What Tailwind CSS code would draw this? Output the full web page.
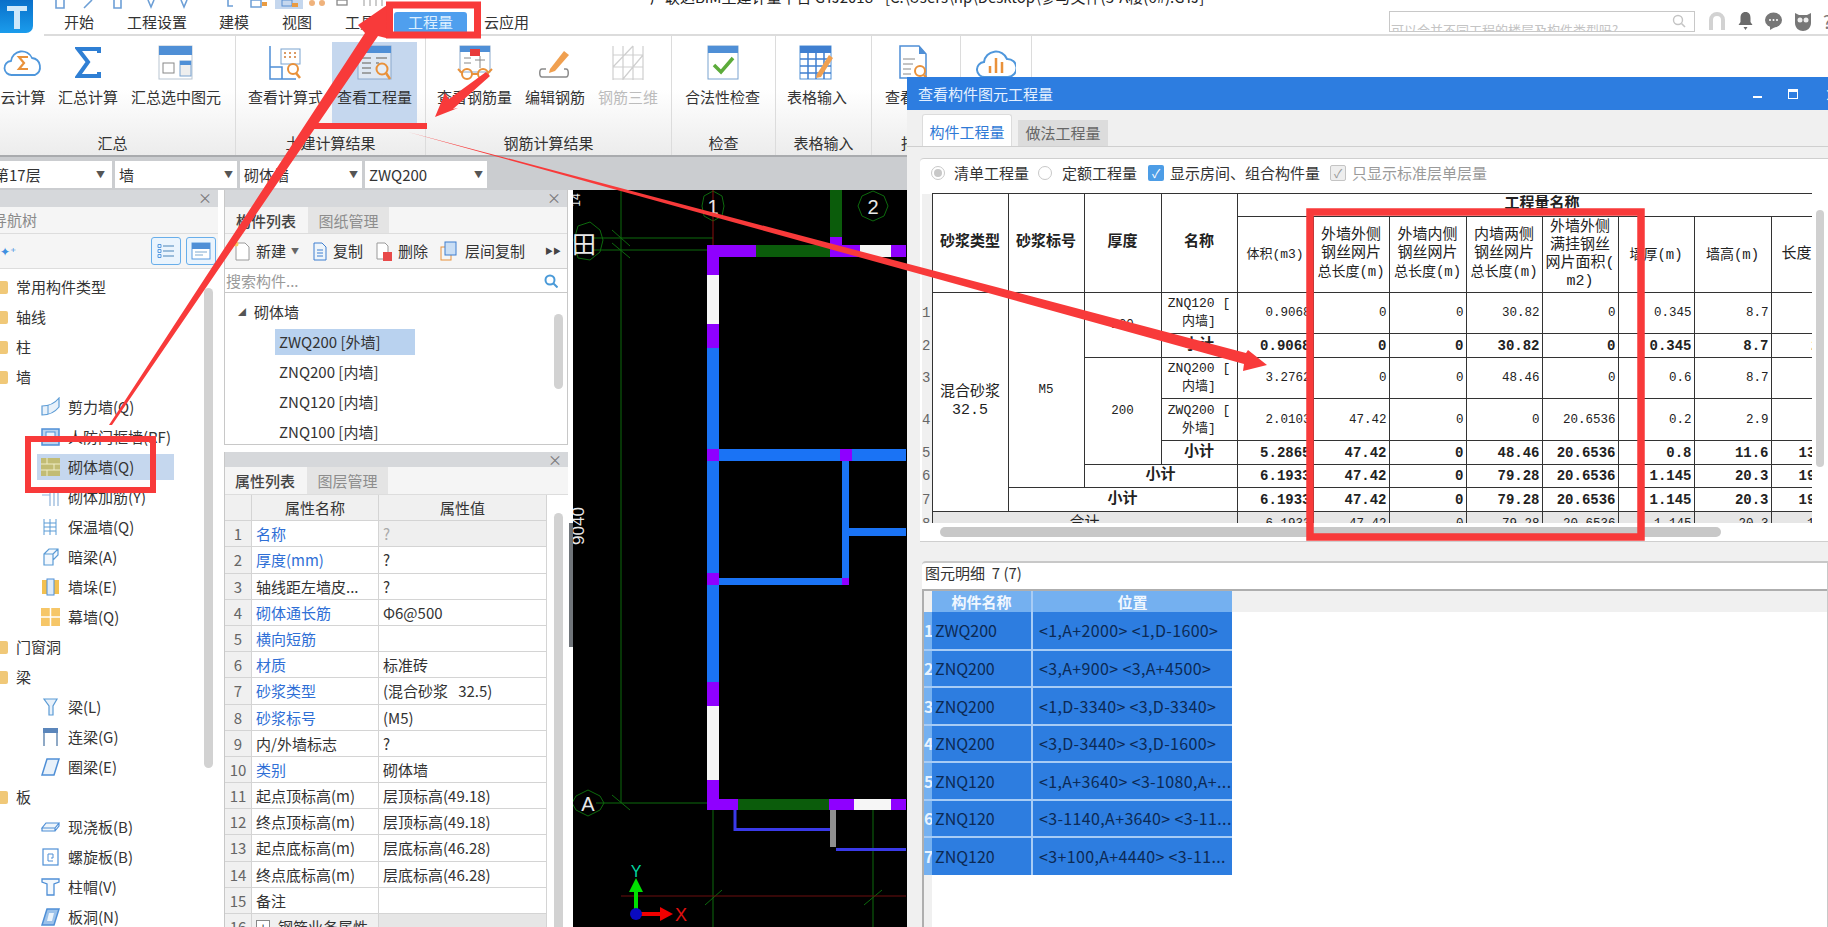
<!DOCTYPE html>
<html lang="zh">
<head>
<meta charset="utf-8">
<title>查看构件图元工程量</title>
<script src="https://cdn.jsdelivr.net/npm/@tailwindcss/browser@4"></script>
</head>
<body>
<div class="relative w-[1828px] h-[927px] overflow-hidden bg-white text-[#333] text-[15px] leading-[20px] [font-family:'Noto_Sans_CJK_SC',sans-serif]">

  <!-- app header -->
  <header class="flex h-[36px]">
    <div class="w-[44px] shrink-0">
      <div class="w-[33px] h-[33px] rounded-br-[7px] bg-gradient-to-b from-[#0a6fc9] to-[#1b9cec] flex items-center justify-center">
        <svg width="22" height="26" viewBox="0 0 22 26"><path d="M1 2h20v5h-7v18h-6V7H1z" fill="#cfe8fa"/></svg>
      </div>
    </div>
    <div class="flex-1 border-b-2 border-[#dcdcdc] flex flex-col">
      <div class="h-[12px] flex items-start">
        <svg class="shrink-0" width="340" height="12" viewBox="44 0 340 12">
          <path d="M56 0v8h8V0M84 8l8-8M114 0v8h7V0M148 0l3 7 3-7M181 0l3 7 3-7" fill="none" stroke="#6d9fd6" stroke-width="1.6"/>
          <path d="M228 0v6h5" fill="none" stroke="#6d9fd6" stroke-width="1.6"/>
          <rect x="251" y="0" width="10" height="7" fill="none" stroke="#6d9fd6" stroke-width="1.5"/><rect x="262" y="2" width="5" height="4" fill="#e99b42"/>
          <rect x="275" y="0" width="28" height="9" fill="#c5d7ee"/><rect x="282" y="0" width="10" height="6" fill="none" stroke="#5a8fd0"/><rect x="292" y="3" width="6" height="4" fill="#e99b42"/>
          <circle cx="312" cy="3" r="3" fill="#efb27c"/><circle cx="322" cy="3" r="3" fill="#efb27c"/>
          <rect x="337" y="0" width="10" height="5" fill="none" stroke="#888" stroke-width="1.3"/>
          <path d="M364 0v6M370 0v6M376 0v6M382 0v6" stroke="#ccc" stroke-width="2"/>
        </svg>
        <span class="ml-[266px] -mt-[13px] whitespace-nowrap text-[#222]">广联达BIM土建计量平台 GTJ2018 - [C:\Users\hp\Desktop\参与文件(3-A楼(6#).GTJ]</span>
      </div>
      <nav class="h-[22px] flex items-end pl-[20px] relative">
        <span class="h-[22px] leading-[20px]">开始</span>
        <span class="h-[22px] leading-[20px] ml-[33px]">工程设置</span>
        <span class="h-[22px] leading-[20px] ml-[32px]">建模</span>
        <span class="h-[22px] leading-[20px] ml-[33px]">视图</span>
        <span class="h-[22px] leading-[20px] ml-[33px]">工具</span>
        <span class="h-[22px] leading-[20px] ml-[19px] px-[14px] rounded-t-[3px] bg-[#4f9fee] text-[#dcefff]">工程量</span>
        <span class="h-[22px] leading-[20px] ml-[17px]">云应用</span>
        <div class="ml-auto h-[22px] flex items-start">
          <div class="w-[306px] h-[21px] -mt-[1px] border border-[#c8c8c8] overflow-hidden flex justify-between pl-[1px] pr-[8px]">
            <span class="text-[13px] text-[#c4c4c4] pt-[8px] whitespace-nowrap">可以合并不同工程的楼层及构件类型吗?</span>
            <svg class="mt-[2px]" width="14" height="14" viewBox="0 0 14 14"><circle cx="6" cy="6" r="4.5" fill="none" stroke="#c4c4c4" stroke-width="1.4"/><path d="M9.5 9.5 13 13" stroke="#c4c4c4" stroke-width="1.6"/></svg>
          </div>
          <div class="w-[133px] h-[20px] -mt-[1px] flex items-center pl-[12px] gap-[10px]">
            <svg class="shrink-0" width="20" height="22" viewBox="0 0 20 22"><path d="M2 20V10a8 8 0 0 1 16 0v10h-4V10a4 4 0 0 0-8 0v10z" fill="#d2d2d2"/></svg>
            <svg class="shrink-0" width="17" height="20" viewBox="0 0 17 20"><path d="M8.500 1c3.500 0 5 2.500 5 6v4l2 3H1.500l2-3V7c0-3.500 1.500-6 5-6zM6.500 16h4l-2 3z" fill="#6a6a6a"/></svg>
            <svg class="shrink-0" width="19" height="18" viewBox="0 0 19 18"><ellipse cx="9.500" cy="8" rx="8.500" ry="7.500" fill="#777"/><path d="M6 14v4l5-3z" fill="#777"/><circle cx="6" cy="8" r="1" fill="#fff"/><circle cx="9.500" cy="8" r="1" fill="#fff"/><circle cx="13" cy="8" r="1" fill="#fff"/></svg>
            <svg class="shrink-0" width="20" height="22" viewBox="0 0 20 22"><path d="M2 3l4 2h8l4-2v10c0 5-4 8-8 8s-8-3-8-8z" fill="#777"/><circle cx="7" cy="10" r="2.500" fill="#eee"/><circle cx="13" cy="10" r="2.500" fill="#eee"/></svg>
            <span class="text-[18px] text-[#777]">?</span>
          </div>
        </div>
      </nav>
    </div>
  </header>

  <!-- ribbon -->
  <section class="h-[119px] flex bg-gradient-to-b from-white from-[45%] to-[#ececec]">
    <div class="w-[236px] shrink-0 border-r border-[#dcdcdc] pt-[6px] flex flex-col items-stretch">
      <div class="h-[81px] flex gap-[12px]">
        <div class="w-[46px] flex flex-col items-center pt-[3px] whitespace-nowrap">
          <svg class="h-[36px]" width="42" height="36" viewBox="0 0 42 36"><path d="M10 30a7 7 0 0 1-1-14 11 11 0 0 1 21-3 9 9 0 0 1 3 17z" fill="none" stroke="#4f97dc" stroke-width="1.800"/><path d="M26 12h-9l5 6-5 6h9" fill="none" stroke="#e9913a" stroke-width="2.200"/></svg>
          <span class="mt-[6px]">云计算</span>
        </div>
        <div class="w-[60px] flex flex-col items-center pt-[3px] whitespace-nowrap">
          <svg class="h-[36px]" width="26" height="36" viewBox="0 0 26 36"><path d="M24 8V4H3l10 13L3 31h21v-4" fill="none" stroke="#2f7fd4" stroke-width="4"/></svg>
          <span class="mt-[6px]">汇总计算</span>
        </div>
        <div class="w-[92px] flex flex-col items-center pt-[3px] whitespace-nowrap">
          <svg class="h-[36px]" width="36" height="36" viewBox="0 0 36 36"><rect x="1" y="1" width="33" height="33" fill="#fff" stroke="#b9c5d2"/><rect x="1" y="1" width="33" height="9" fill="#4f8fd6"/><rect x="5" y="18" width="11" height="10" fill="none" stroke="#888"/><rect x="22" y="16" width="11" height="15" fill="#eee" stroke="#7aa3d0"/><rect x="22" y="16" width="11" height="4" fill="#4f8fd6"/></svg>
          <span class="mt-[6px]">汇总选中图元</span>
        </div>
      </div>
      <div class="h-[20px] mt-[10px] text-center pr-[10px]">汇总</div>
    </div>
    <div class="w-[190px] shrink-0 border-r border-[#dcdcdc] pt-[6px] flex flex-col">
      <div class="h-[81px] flex pl-[12px] gap-[9px]">
        <div class="w-[75px] flex flex-col items-center pt-[3px] whitespace-nowrap">
          <svg class="h-[36px]" width="34" height="36" viewBox="0 0 34 36"><path d="M1 1v33h26" fill="none" stroke="#4f8fd6" stroke-width="1.500"/><path d="M1 22h12v12" fill="none" stroke="#4f8fd6" stroke-width="1.500"/><rect x="12" y="4" width="19" height="15" fill="#fff" stroke="#7aa3d0"/><path d="M15 8h2M20 8h2M25 8h2M15 12h2M20 12h2M25 12h2" stroke="#d07a33" stroke-width="1.500"/><circle cx="24" cy="24" r="5" fill="#fff" stroke="#e9913a" stroke-width="2"/><path d="m27 28 4 5" stroke="#e9913a" stroke-width="2.500"/></svg>
          <span class="mt-[6px]">查看计算式</span>
        </div>
        <div class="w-[85px] h-[81px] bg-[#c5d7ee] flex flex-col items-center pt-[3px] whitespace-nowrap">
          <svg class="h-[36px]" width="36" height="36" viewBox="0 0 36 36"><rect x="1" y="1" width="33" height="33" fill="#dfe8f3" stroke="#8ba9cc"/><rect x="1" y="1" width="33" height="7" fill="#4f8fd6"/><path d="M5 13h9M5 18h9M5 23h9M5 28h9M19 13h11M19 18h3" stroke="#8a8a8a" stroke-width="1.300"/><circle cx="25" cy="24" r="5.500" fill="#e4edf7" stroke="#e9913a" stroke-width="2"/><path d="m29 28 4 6" stroke="#e9913a" stroke-width="2.500"/></svg>
          <span class="mt-[6px]">查看工程量</span>
        </div>
      </div>
      <div class="h-[20px] mt-[10px] text-center">土建计算结果</div>
    </div>
    <div class="w-[246px] shrink-0 border-r border-[#dcdcdc] pt-[6px] flex flex-col">
      <div class="h-[81px] flex pl-[11px] gap-[13px]">
        <div class="w-[75px] flex flex-col items-center pt-[3px] whitespace-nowrap">
          <svg class="h-[36px]" width="36" height="36" viewBox="0 0 36 36"><rect x="3" y="1" width="30" height="26" fill="#fff" stroke="#8ba9cc"/><rect x="3" y="1" width="30" height="6" fill="#4f8fd6"/><rect x="13" y="4" width="10" height="7" fill="#e83a3a"/><path d="M7 13h7M7 18h7M18 15h10M23 11v12" stroke="#888"/><circle cx="10" cy="29" r="5" fill="none" stroke="#e9913a" stroke-width="2"/><circle cx="26" cy="29" r="5" fill="none" stroke="#e9913a" stroke-width="2"/><path d="M15 29h6M5 28 1 24M31 28l4-4" stroke="#e9913a" stroke-width="2"/></svg>
          <span class="mt-[6px]">查看钢筋量</span>
        </div>
        <div class="w-[60px] flex flex-col items-center pt-[3px] whitespace-nowrap">
          <svg class="h-[36px]" width="34" height="36" viewBox="0 0 34 36"><path d="M8 24H4c-3 0-3 8 0 8h24c3 0 3-8 0-8h-2" fill="none" stroke="#8a8a8a" stroke-width="1.500"/><path d="m12 24 14-18 5 4-14 16-6 2z" fill="#f0a050"/></svg>
          <span class="mt-[6px]">编辑钢筋</span>
        </div>
        <div class="w-[60px] flex flex-col items-center pt-[3px] whitespace-nowrap text-[#bcbcbc]">
          <svg class="h-[36px]" width="36" height="36" viewBox="0 0 36 36"><path d="M3 1v34M13 1v34M23 1v34M33 1v34M3 10h30M3 22h30M3 34h30M3 22 23 1M13 34l20-24" fill="none" stroke="#cfcfcf" stroke-width="1.200"/></svg>
          <span class="mt-[6px]">钢筋三维</span>
        </div>
      </div>
      <div class="h-[20px] mt-[10px] text-center">钢筋计算结果</div>
    </div>
    <div class="w-[104px] shrink-0 border-r border-[#dcdcdc] pt-[6px] flex flex-col">
      <div class="h-[81px] flex pl-[13px]">
        <div class="w-[75px] flex flex-col items-center pt-[3px] whitespace-nowrap">
          <svg class="h-[36px]" width="32" height="36" viewBox="0 0 32 36"><rect x="1" y="1" width="30" height="33" fill="#fff" stroke="#7aa3d0"/><rect x="1" y="1" width="30" height="7" fill="#4f8fd6"/><path d="m7 20 7 7 12-14" fill="none" stroke="#5cab3a" stroke-width="3.500"/></svg>
          <span class="mt-[6px]">合法性检查</span>
        </div>
      </div>
      <div class="h-[20px] mt-[10px] text-center">检查</div>
    </div>
    <div class="w-[96px] shrink-0 border-r border-[#dcdcdc] pt-[6px] flex flex-col">
      <div class="h-[81px] flex pl-[11px]">
        <div class="w-[60px] flex flex-col items-center pt-[3px] whitespace-nowrap">
          <svg class="h-[36px]" width="36" height="36" viewBox="0 0 36 36"><rect x="1" y="1" width="31" height="33" fill="#fff" stroke="#4f8fd6"/><rect x="1" y="1" width="31" height="7" fill="#3f7fd0"/><path d="M1 14h31M1 21h31M1 28h31M9 8v26M17 8v26M25 8v26" stroke="#3f7fd0" stroke-width="1.500"/><path d="m18 29 12-19 4 3-12 19-5 1z" fill="#f0a050"/></svg>
          <span class="mt-[6px]">表格输入</span>
        </div>
      </div>
      <div class="h-[20px] mt-[10px] text-center">表格输入</div>
    </div>
    <div class="w-[89px] shrink-0 border-r border-[#dcdcdc] pt-[6px] flex flex-col">
      <div class="h-[81px] flex pl-[13px]">
        <div class="w-[60px] flex flex-col items-center pt-[3px] whitespace-nowrap">
          <svg class="h-[36px]" width="32" height="36" viewBox="0 0 32 36"><path d="M1 1h19l7 8v24H1z" fill="#fff" stroke="#4f8fd6" stroke-width="1.500"/><path d="M20 1v8h7" fill="#4f8fd6"/><path d="M4 14h12M4 19h10M4 24h8M4 29h8" stroke="#888"/><circle cx="21" cy="26" r="5" fill="#fff" stroke="#e9913a" stroke-width="2"/><path d="m25 30 4 5" stroke="#e9913a" stroke-width="2.500"/></svg>
          <span class="mt-[6px]">查看报表</span>
        </div>
      </div>
      <div class="h-[20px] mt-[10px] text-center">报表</div>
    </div>
    <div class="w-[71px] shrink-0 border-r border-[#dcdcdc] pt-[6px] flex flex-col">
      <div class="h-[81px] flex justify-center pt-[3px]">
        <svg width="40" height="36" viewBox="0 0 40 36"><path d="M9 32a7 7 0 0 1-1-15 12 12 0 0 1 23-3 9 9 0 0 1 1 18z" fill="none" stroke="#4f97dc" stroke-width="2"/><path d="M14 28v-7M20 28V13M26 28v-11" stroke="#e9913a" stroke-width="2.500"/></svg>
      </div>
    </div>
  </section>

  <!-- selector band -->
  <section class="h-[35px] bg-[#cbcdd0] border-t-2 border-[#a9abae] flex gap-[3px] pt-[4px]">
    <div class="w-[112px] h-[27px] bg-white flex items-center justify-between pr-[7px] pl-0 overflow-hidden"><span class="-ml-[6px]">第17层</span><span class="text-[9px] text-[#555]">▼</span></div>
    <div class="w-[122px] h-[27px] bg-white flex items-center justify-between px-[4px]"><span>墙</span><span class="text-[9px] text-[#555]">▼</span></div>
    <div class="w-[122px] h-[27px] bg-white flex items-center justify-between px-[4px]"><span>砌体墙</span><span class="text-[9px] text-[#555]">▼</span></div>
    <div class="w-[122px] h-[27px] bg-white flex items-center justify-between px-[4px]"><span>ZWQ200</span><span class="text-[9px] text-[#555]">▼</span></div>
  </section>

  <!-- main -->
  <main class="flex h-[737px]">
    <!-- navigation tree -->
    <aside class="relative w-[218px] shrink-0 flex flex-col overflow-hidden">
      <div class="h-[17px] shrink-0 bg-[#d6d8db] text-right pr-[6px] text-[#777] text-[14px] leading-[14px]">×</div>
      <div class="h-[26px] shrink-0 bg-[#f5f5f5] text-[#8a8a8a] leading-[26px] -ml-[8px]">导航树</div>
      <div class="h-[36px] shrink-0 bg-[#f5f5f5] border-y border-[#ddd] flex items-center justify-between pr-[2px] pl-[0px]">
        <span class="text-[#3f8fe0] text-[12px]">✦⁺</span>
        <div class="flex gap-[5px]">
          <div class="w-[30px] h-[28px] rounded-[3px] border border-[#68aeea] bg-[#eaf4fd] flex items-center justify-center">
            <svg width="18" height="18" viewBox="0 0 18 18"><path d="M6 4h11M6 9h11M6 14h11" stroke="#7fa9cf" stroke-width="1.300"/><path d="M1 2.500h3v3H1zM1 7.500h3v3H1zM1 12.500h3v3H1z" fill="none" stroke="#5a9be0"/></svg>
          </div>
          <div class="w-[30px] h-[28px] rounded-[3px] border border-[#68aeea] bg-[#eaf4fd] flex items-center justify-center">
            <svg width="20" height="18" viewBox="0 0 20 18"><rect x="1" y="1" width="18" height="16" fill="#fff" stroke="#5a9be0"/><rect x="1" y="1" width="18" height="6" fill="#4f8fd6"/><path d="M4 10h12M4 13h8" stroke="#7fa9cf"/></svg>
          </div>
        </div>
      </div>
      <ul class="pt-[3px] shrink-0">
        <li class="h-[30px] flex items-center gap-[8px]"><span class="w-[8px] h-[13px] rounded-r-[2px] bg-[#f0c878] shrink-0"></span>常用构件类型</li>
        <li class="h-[30px] flex items-center gap-[8px]"><span class="w-[8px] h-[13px] rounded-r-[2px] bg-[#f0c878] shrink-0"></span>轴线</li>
        <li class="h-[30px] flex items-center gap-[8px]"><span class="w-[8px] h-[13px] rounded-r-[2px] bg-[#f0c878] shrink-0"></span>柱</li>
        <li class="h-[30px] flex items-center gap-[8px]"><span class="w-[8px] h-[13px] rounded-r-[2px] bg-[#f0c878] shrink-0"></span>墙</li>
        <li class="h-[30px] flex items-center pl-[41px] gap-[8px]"><svg class="shrink-0" width="19" height="20" viewBox="0 0 19 20"><path d="M1 9c6 0 13-3 17-8v9c-4 5-11 8-17 8z" fill="#e8f1fa" stroke="#5b9bd5" stroke-width="1.200"/><path d="M7 8v9" stroke="#5b9bd5"/></svg>剪力墙(Q)</li>
        <li class="h-[30px] flex items-center pl-[41px] gap-[8px]"><svg class="shrink-0" width="19" height="20" viewBox="0 0 19 20"><rect x="1" y="2" width="17" height="16" fill="#b9d4ef" stroke="#4f8fd6" stroke-width="1.500"/><rect x="5" y="5" width="9" height="9" fill="#eaf2fb" stroke="#4f8fd6"/></svg>人防门框墙(RF)</li>
        <li class="h-[26px] my-[2px] ml-[37px] w-[137px] bg-[#c5d7ee] flex items-center pl-[4px] gap-[8px]"><svg class="shrink-0" width="19" height="18" viewBox="0 0 19 18"><rect x="0" y="0" width="19" height="18" fill="#c2bc74"/><path d="M0 6h19M0 12h19M6 0v6M13 6v6M6 12v6" stroke="#f0edc6"/></svg>砌体墙(Q)</li>
        <li class="h-[30px] flex items-center pl-[41px] gap-[8px]"><svg class="shrink-0" width="19" height="20" viewBox="0 0 19 20"><path d="M1 8h8M9 3v16M13 3v16M17 3v16" stroke="#8fb3d9" stroke-width="1.200"/></svg>砌体加筋(Y)</li>
        <li class="h-[30px] flex items-center pl-[41px] gap-[8px]"><svg class="shrink-0" width="19" height="20" viewBox="0 0 19 20"><path d="M3 2v16M9 2v16M15 2v16M3 6h12M3 10h12M3 14h12" fill="none" stroke="#5b9bd5"/></svg>保温墙(Q)</li>
        <li class="h-[30px] flex items-center pl-[41px] gap-[8px]"><svg class="shrink-0" width="19" height="20" viewBox="0 0 19 20"><path d="M3 7l5-5h9v6l-5 5v5H3zM3 7h9v6M12 7l5-5" fill="#f3f8fd" stroke="#5b9bd5" stroke-width="1.200"/></svg>暗梁(A)</li>
        <li class="h-[30px] flex items-center pl-[41px] gap-[8px]"><svg class="shrink-0" width="19" height="20" viewBox="0 0 19 20"><rect x="1" y="3" width="17" height="14" fill="#f3c04f"/><rect x="6" y="2" width="7" height="16" fill="#dcebfa" stroke="#4f8fd6"/></svg>墙垛(E)</li>
        <li class="h-[30px] flex items-center pl-[41px] gap-[8px]"><svg class="shrink-0" width="19" height="20" viewBox="0 0 19 20"><rect x="0" y="1" width="19" height="18" fill="#f6c667"/><path d="M9.500 1v18M0 10h19" stroke="#fff" stroke-width="1.500"/></svg>幕墙(Q)</li>
        <li class="h-[30px] flex items-center gap-[8px]"><span class="w-[8px] h-[13px] rounded-r-[2px] bg-[#f0c878] shrink-0"></span>门窗洞</li>
        <li class="h-[30px] flex items-center gap-[8px]"><span class="w-[8px] h-[13px] rounded-r-[2px] bg-[#f0c878] shrink-0"></span>梁</li>
        <li class="h-[30px] flex items-center pl-[41px] gap-[8px]"><svg class="shrink-0" width="19" height="20" viewBox="0 0 19 20"><path d="M3 2h13l-4 7v9H8V9z" fill="#e8f1fa" stroke="#5b9bd5" stroke-width="1.200"/></svg>梁(L)</li>
        <li class="h-[30px] flex items-center pl-[41px] gap-[8px]"><svg class="shrink-0" width="19" height="20" viewBox="0 0 19 20"><path d="M3 19V4h13v15" fill="none" stroke="#8fa9c6" stroke-width="2"/><rect x="2" y="1" width="15" height="5" fill="#5b86bb"/></svg>连梁(G)</li>
        <li class="h-[30px] flex items-center pl-[41px] gap-[8px]"><svg class="shrink-0" width="19" height="20" viewBox="0 0 19 20"><path d="M6 2h12l-5 16H1z" fill="#e8f1fa" stroke="#4f8fd6" stroke-width="1.500"/></svg>圈梁(E)</li>
        <li class="h-[30px] flex items-center gap-[8px]"><span class="w-[8px] h-[13px] rounded-r-[2px] bg-[#f0c878] shrink-0"></span>板</li>
        <li class="h-[30px] flex items-center pl-[41px] gap-[8px]"><svg class="shrink-0" width="19" height="20" viewBox="0 0 19 20"><path d="M5 6h13l-4 5H1zM1 11v3h13v-3M14 14l4-5V6" fill="#eef5fb" stroke="#4f8fd6" stroke-width="1.200"/></svg>现浇板(B)</li>
        <li class="h-[30px] flex items-center pl-[41px] gap-[8px]"><svg class="shrink-0" width="19" height="20" viewBox="0 0 19 20"><rect x="2" y="2" width="15" height="16" fill="none" stroke="#4f8fd6" stroke-width="1.200"/><path d="M12 14H7V7h5v4H10" fill="none" stroke="#4f8fd6"/></svg>螺旋板(B)</li>
        <li class="h-[30px] flex items-center pl-[41px] gap-[8px]"><svg class="shrink-0" width="19" height="20" viewBox="0 0 19 20"><path d="M1 2h17v3l-5 2v11H6V7L1 5z" fill="#f3f8fd" stroke="#4f8fd6" stroke-width="1.300"/></svg>柱帽(V)</li>
        <li class="h-[30px] flex items-center pl-[41px] gap-[8px]"><svg class="shrink-0" width="19" height="20" viewBox="0 0 19 20"><path d="M6 2h12l-5 16H1z" fill="#9cc2ea" stroke="#4f8fd6" stroke-width="1.500"/><path d="M8 6h5l-2 8H6z" fill="#eaf3fb"/></svg>板洞(N)</li>
      </ul>
      <div class="absolute left-[204px] top-[98px] w-[9px] h-[480px] rounded-full bg-[#d2d2d2]"></div>
    </aside>

    <div class="w-[6px] shrink-0 bg-white"></div>

    <!-- component list + properties -->
    <section class="w-[344px] shrink-0 flex flex-col">
      <div class="h-[255px] shrink-0 border border-t-0 border-[#c8c8c8] flex flex-col relative overflow-hidden">
        <div class="h-[17px] shrink-0 bg-[#d6d8db] text-right pr-[6px] text-[#777] text-[14px] leading-[14px]">×</div>
        <div class="h-[27px] shrink-0 bg-[#f5f5f5] flex pl-[11px] border-b border-[#ddd]">
          <span class="w-[72px] font-medium leading-[27px] text-[#444]">构件列表</span>
          <span class="w-[81px] bg-[#e4e4e4] text-[#8d8d8d] text-center leading-[27px]">图纸管理</span>
        </div>
        <div class="h-[35px] shrink-0 bg-[#f5f5f5] border-b border-[#d0d0d0] flex items-center pl-[8px] pr-[6px] whitespace-nowrap">
          <svg class="shrink-0" width="17" height="20" viewBox="0 0 17 20"><path d="M3 2h9l4 4v13H3z" fill="#fff" stroke="#9a9a9a"/><circle cx="3" cy="3" r="2.500" fill="#f6cc66"/></svg>
          <span class="ml-[6px]">新建</span><span class="ml-[5px] text-[8px] text-[#666]">▼</span>
          <svg class="ml-[14px] shrink-0" width="14" height="19" viewBox="0 0 14 19"><path d="M1 1h8l4 4v13H1z" fill="#eef5fb" stroke="#3f7fd0"/><path d="M4 8h6M4 11h6M4 14h6" stroke="#3f7fd0"/></svg>
          <span class="ml-[6px]">复制</span>
          <svg class="ml-[13px] shrink-0" width="16" height="19" viewBox="0 0 16 19"><path d="M1 1h8l3 3v13H1z" fill="#fff" stroke="#999"/><rect x="7" y="10" width="9" height="9" fill="#e84a4a"/></svg>
          <span class="ml-[6px]">删除</span>
          <svg class="ml-[12px] shrink-0" width="17" height="20" viewBox="0 0 17 20"><rect x="1" y="6" width="10" height="13" fill="none" stroke="#e9913a"/><rect x="5" y="1" width="11" height="13" fill="#c9def5" stroke="#3f7fd0"/></svg>
          <span class="ml-[8px]">层间复制</span>
          <span class="ml-auto text-[8px] text-[#444]">▶▶</span>
        </div>
        <div class="h-[24px] shrink-0 border-b border-[#c8c8c8] flex items-center justify-between pr-[9px] pl-[1px] text-[#9a9a9a]">
          <span>搜索构件...</span>
          <svg width="14" height="14" viewBox="0 0 14 14"><circle cx="6" cy="6" r="4.500" fill="none" stroke="#4a9ad8" stroke-width="2"/><path d="m9.500 9.500 4 4" stroke="#4a9ad8" stroke-width="2"/></svg>
        </div>
        <div class="pt-[4px] shrink-0">
          <div class="h-[30px] flex items-center pl-[13px]"><span class="text-[8px] text-[#555] mr-[8px]">◢</span>砌体墙</div>
          <div class="h-[26px] mt-[2px] mb-[2px] ml-[50px] w-[140px] bg-[#b9d2ef] flex items-center pl-[4px]">ZWQ200 [外墙]</div>
          <div class="h-[30px] flex items-center pl-[54px]">ZNQ200 [内墙]</div>
          <div class="h-[30px] flex items-center pl-[54px]">ZNQ120 [内墙]</div>
          <div class="h-[30px] flex items-center pl-[54px]">ZNQ100 [内墙]</div>
        </div>
        <div class="absolute left-[329px] top-[124px] w-[9px] h-[75px] rounded-full bg-[#d2d2d2]"></div>
      </div>
      <div class="h-[7px] shrink-0"></div>
      <div class="relative flex-1 border-l border-[#c8c8c8] flex flex-col overflow-hidden">
        <div class="h-[15px] shrink-0 bg-[#d6d8db] text-right pr-[6px] text-[#777] text-[14px] leading-[14px]">×</div>
        <div class="h-[28px] shrink-0 bg-[#f5f5f5] flex pl-[10px] border-b border-[#ddd]">
          <span class="w-[72px] font-medium leading-[27px] text-[#444]">属性列表</span>
          <span class="w-[81px] bg-[#e4e4e4] text-[#8d8d8d] text-center leading-[27px]">图层管理</span>
        </div>
        <div class="w-[322px] shrink-0 grid grid-cols-[27px_127px_168px] auto-rows-[26.2px] leading-[26px] text-[#333]">
          <div class="bg-[#f0f0f0] border-r border-b border-[#d4d4d4]"></div><div class="bg-[#f0f0f0] border-r border-b border-[#d4d4d4] text-center">属性名称</div><div class="bg-[#f0f0f0] border-r border-b border-[#d4d4d4] text-center">属性值</div>
          <div class="bg-[#f0f0f0] border-r border-b border-[#d4d4d4] text-center text-[#666]">1</div><div class="border-r border-b border-[#d4d4d4] pl-[4px] text-[#2f6fd6]">名称</div><div class="bg-[#efefef] border-r border-b border-[#d4d4d4] pl-[4px] text-[#aaa]">?</div>
          <div class="bg-[#f0f0f0] border-r border-b border-[#d4d4d4] text-center text-[#666]">2</div><div class="border-r border-b border-[#d4d4d4] pl-[4px] text-[#2f6fd6]">厚度(mm)</div><div class="border-r border-b border-[#d4d4d4] pl-[4px]">?</div>
          <div class="bg-[#f0f0f0] border-r border-b border-[#d4d4d4] text-center text-[#666]">3</div><div class="border-r border-b border-[#d4d4d4] pl-[4px]">轴线距左墙皮...</div><div class="border-r border-b border-[#d4d4d4] pl-[4px]">?</div>
          <div class="bg-[#f0f0f0] border-r border-b border-[#d4d4d4] text-center text-[#666]">4</div><div class="border-r border-b border-[#d4d4d4] pl-[4px] text-[#2f6fd6]">砌体通长筋</div><div class="border-r border-b border-[#d4d4d4] pl-[4px]">Φ6@500</div>
          <div class="bg-[#f0f0f0] border-r border-b border-[#d4d4d4] text-center text-[#666]">5</div><div class="border-r border-b border-[#d4d4d4] pl-[4px] text-[#2f6fd6]">横向短筋</div><div class="border-r border-b border-[#d4d4d4] pl-[4px]"></div>
          <div class="bg-[#f0f0f0] border-r border-b border-[#d4d4d4] text-center text-[#666]">6</div><div class="border-r border-b border-[#d4d4d4] pl-[4px] text-[#2f6fd6]">材质</div><div class="border-r border-b border-[#d4d4d4] pl-[4px]">标准砖</div>
          <div class="bg-[#f0f0f0] border-r border-b border-[#d4d4d4] text-center text-[#666]">7</div><div class="border-r border-b border-[#d4d4d4] pl-[4px] text-[#2f6fd6]">砂浆类型</div><div class="border-r border-b border-[#d4d4d4] pl-[4px] whitespace-pre">(混合砂浆   32.5)</div>
          <div class="bg-[#f0f0f0] border-r border-b border-[#d4d4d4] text-center text-[#666]">8</div><div class="border-r border-b border-[#d4d4d4] pl-[4px] text-[#2f6fd6]">砂浆标号</div><div class="border-r border-b border-[#d4d4d4] pl-[4px]">(M5)</div>
          <div class="bg-[#f0f0f0] border-r border-b border-[#d4d4d4] text-center text-[#666]">9</div><div class="border-r border-b border-[#d4d4d4] pl-[4px]">内/外墙标志</div><div class="border-r border-b border-[#d4d4d4] pl-[4px]">?</div>
          <div class="bg-[#f0f0f0] border-r border-b border-[#d4d4d4] text-center text-[#666]">10</div><div class="border-r border-b border-[#d4d4d4] pl-[4px] text-[#2f6fd6]">类别</div><div class="border-r border-b border-[#d4d4d4] pl-[4px]">砌体墙</div>
          <div class="bg-[#f0f0f0] border-r border-b border-[#d4d4d4] text-center text-[#666]">11</div><div class="border-r border-b border-[#d4d4d4] pl-[4px]">起点顶标高(m)</div><div class="border-r border-b border-[#d4d4d4] pl-[4px]">层顶标高(49.18)</div>
          <div class="bg-[#f0f0f0] border-r border-b border-[#d4d4d4] text-center text-[#666]">12</div><div class="border-r border-b border-[#d4d4d4] pl-[4px]">终点顶标高(m)</div><div class="border-r border-b border-[#d4d4d4] pl-[4px]">层顶标高(49.18)</div>
          <div class="bg-[#f0f0f0] border-r border-b border-[#d4d4d4] text-center text-[#666]">13</div><div class="border-r border-b border-[#d4d4d4] pl-[4px]">起点底标高(m)</div><div class="border-r border-b border-[#d4d4d4] pl-[4px]">层底标高(46.28)</div>
          <div class="bg-[#f0f0f0] border-r border-b border-[#d4d4d4] text-center text-[#666]">14</div><div class="border-r border-b border-[#d4d4d4] pl-[4px]">终点底标高(m)</div><div class="border-r border-b border-[#d4d4d4] pl-[4px]">层底标高(46.28)</div>
          <div class="bg-[#f0f0f0] border-r border-b border-[#d4d4d4] text-center text-[#666]">15</div><div class="border-r border-b border-[#d4d4d4] pl-[4px]">备注</div><div class="border-r border-b border-[#d4d4d4] pl-[4px]"></div>
          <div class="bg-[#f0f0f0] border-r border-b border-[#d4d4d4] text-center text-[#666]">16</div><div class="bg-[#f0f0f0] border-r border-b border-[#d4d4d4] pl-[4px] flex items-center gap-[8px]"><span class="w-[14px] h-[14px] border border-[#888] bg-white text-[12px] leading-[11px] text-center">+</span>钢筋业务属性</div><div class="bg-[#e6e6e6] border-r border-b border-[#d4d4d4]"></div>
        </div>
        <div class="absolute left-[329px] top-[61px] w-[9px] h-[420px] rounded-full bg-[#d2d2d2]"></div>
      </div>
    </section>

    <!-- splitter -->
    <div class="w-[5px] shrink-0 bg-white flex items-start justify-end pt-[333px]"><div class="w-[4px] h-[124px] bg-[#70757a]"></div></div>

    <!-- cad canvas -->
    <svg class="shrink-0 bg-black" width="334" height="737" viewBox="573 190 334 737">
      <g stroke="#0d6a0d" stroke-width="1" fill="none">
        <path d="M621 190V803M593 238H713M593 250H707M596 803H707M713 810V927M873 810V927"/>
        <path d="M612 230 630 246M612 243 630 258M612 795 630 810M705 905 722 890M864 905 882 890"/>
        <polygon points="713,191 722,196 724,206 722,216 713,221 704,216 702,206 704,196"/>
        <polygon points="873,191 884,196 888,206 884,216 873,221 862,216 858,206 862,196"/>
        <polygon points="588,790 600,796 604,803 600,810 588,816 576,810 572,803 576,796"/>
        <polygon points="590,222 600,230 603,240 600,252 590,260 578,258 574,240 578,226"/>
      </g>
      <path d="M713 190V245" stroke="#8a0f0f"/>
      <path d="M621 896H906" stroke="#6d0f0f"/>
      <g fill="#8f00ff">
        <rect x="707" y="245" width="49" height="12"/><rect x="707" y="245" width="12" height="30"/><rect x="707" y="324" width="12" height="24"/>
        <rect x="707" y="449" width="12" height="12"/><rect x="707" y="573" width="12" height="12"/><rect x="707" y="682" width="12" height="24"/>
        <rect x="707" y="780" width="12" height="30"/><rect x="707" y="799" width="31" height="11"/><rect x="829" y="799" width="25" height="11"/><rect x="891" y="799" width="15" height="11"/>
        <rect x="830" y="237" width="12" height="8"/><rect x="830" y="245" width="30" height="12"/><rect x="891" y="245" width="15" height="12"/>
      </g>
      <g fill="#f6f6f6">
        <rect x="707" y="275" width="12" height="49"/><rect x="707" y="706" width="12" height="74"/><rect x="854" y="799" width="37" height="11"/><rect x="860" y="245" width="31" height="12"/>
      </g>
      <g fill="#0b5c0b">
        <rect x="756" y="245" width="74" height="12"/><rect x="830" y="190" width="12" height="47"/><rect x="738" y="799" width="91" height="11"/>
      </g>
      <g fill="#1a73f5">
        <rect x="707" y="348" width="12" height="101"/><rect x="707" y="461" width="12" height="112"/><rect x="707" y="585" width="12" height="97"/>
        <rect x="719" y="449" width="121" height="12"/><rect x="852" y="449" width="54" height="12"/><rect x="842" y="461" width="7" height="117"/>
        <rect x="849" y="528" width="57" height="8"/><rect x="719" y="578" width="123" height="7"/>
      </g>
      <rect x="840" y="449" width="12" height="12" fill="#8f00ff"/><rect x="842" y="578" width="7" height="7" fill="#8f00ff"/>
      <path d="M735 810V829.500H830M836 849.500H906" fill="none" stroke="#3a3ae8" stroke-width="3"/>
      <rect x="830" y="810" width="6" height="37" fill="#8f8f8f"/>
      <g font-family="'Liberation Sans',sans-serif" fill="#e8e8e8">
        <text x="713" y="214" font-size="20" text-anchor="middle">1</text>
        <text x="873" y="214" font-size="20" text-anchor="middle">2</text>
        <text x="588" y="811" font-size="20" text-anchor="middle">A</text>
        <text transform="translate(584 526) rotate(-90)" font-size="17" text-anchor="middle">9040</text>
        <text transform="translate(580 200) rotate(-90)" font-size="12" text-anchor="middle">14</text>
      </g>
      <text x="584" y="253" font-size="24" fill="#e8e8e8" text-anchor="middle" font-family="'Noto Sans CJK SC',sans-serif">田</text>
      <rect x="634" y="885" width="4" height="25" fill="#00e000"/><polygon points="636,878 629,892 643,892" fill="#00e000"/>
      <rect x="641" y="912" width="20" height="4" fill="#f00000"/><polygon points="660,907 673,914 660,921" fill="#f00000"/>
      <circle cx="636" cy="914" r="6" fill="#0a0ac0"/>
      <text x="636" y="877" font-size="16" fill="#00d8a0" text-anchor="middle" font-family="'Liberation Sans',sans-serif">Y</text>
      <text x="681" y="921" font-size="18" fill="#e01010" text-anchor="middle" font-family="'Liberation Sans',sans-serif">X</text>
    </svg>
  </main>

  <!-- floating dialog -->
  <section class="absolute left-[907px] top-[77px] w-[921px] h-[850px] flex flex-col bg-[#f0f0f0]">
    <div class="h-[33px] shrink-0 bg-[#2d7de0] text-[#e4f0ff] flex items-center pl-[11px]">
      <span>查看构件图元工程量</span>
      <div class="ml-auto flex items-center gap-[26px] pr-0 mr-[-8px]">
        <span class="w-[9px] h-[2px] mt-[6px] bg-white"></span>
        <span class="w-[10px] h-[10px] border border-t-[3px] border-white"></span>
        <span class="w-[12px] text-white text-[16px]">×</span>
      </div>
    </div>
    <div class="h-[37px] shrink-0 flex items-end pl-[15px] gap-[6px] border-b border-[#cfcfcf]">
      <span class="w-[90px] h-[32px] bg-white border border-b-0 border-[#dcdcdc] rounded-t-[3px] text-center leading-[34px] text-[#2f7ad6]">构件工程量</span>
      <span class="w-[90px] h-[26px] bg-[#dcdcdc] text-center leading-[26px] text-[#666]">做法工程量</span>
    </div>
    <div class="h-[11px] shrink-0"></div>

    <!-- upper panel -->
    <div class="relative h-[384px] shrink-0 ml-[13px] bg-white border-t border-[#cfcfcf] rounded-tl-[4px] border-b flex flex-col">
      <div class="h-[34px] shrink-0 flex items-center pl-[11px] pb-[7px] whitespace-nowrap">
        <span class="w-[14px] h-[14px] rounded-full border border-[#c8c8c8] flex items-center justify-center"><span class="w-[8px] h-[8px] rounded-full bg-[#c8c8c8]"></span></span>
        <span class="ml-[9px]">清单工程量</span>
        <span class="ml-[9px] w-[14px] h-[14px] rounded-full border border-[#c8c8c8]"></span>
        <span class="ml-[10px]">定额工程量</span>
        <span class="ml-[11px] w-[16px] h-[16px] rounded-[2px] bg-[#4d9de6] text-white text-[12px] leading-[16px] text-center">✓</span>
        <span class="ml-[6px]">显示房间、组合构件量</span>
        <span class="ml-[10px] w-[16px] h-[16px] rounded-[2px] bg-[#eee] border border-[#c4c4c4] text-[#999] text-[12px] leading-[14px] text-center">✓</span>
        <span class="ml-[6px] text-[#9a9a9a]">只显示标准层单层量</span>
      </div>
      <div class="h-[330px] w-[892px] shrink-0 overflow-hidden pl-[2px]">
        <table class="table-fixed border-collapse w-[925px] text-[15px] leading-[18px] text-[#222] [font-family:'Liberation_Mono','Noto_Sans_CJK_SC',monospace]">
          <colgroup>
            <col class="w-[10px]"><col class="w-[76px]"><col class="w-[76px]"><col class="w-[77px]"><col class="w-[76px]"><col class="w-[76px]"><col class="w-[76px]"><col class="w-[77px]"><col class="w-[76px]"><col class="w-[76px]"><col class="w-[76px]"><col class="w-[77px]"><col class="w-[76px]">
          </colgroup>
          <thead>
            <tr class="h-[23px]">
              <th class="bg-[#f0f0f0]" rowspan="2"></th>
              <th class="border border-[#333] font-bold" rowspan="2">砂浆类型</th>
              <th class="border border-[#333] font-bold" rowspan="2">砂浆标号</th>
              <th class="border border-[#333] font-bold" rowspan="2">厚度</th>
              <th class="border border-[#333] font-bold" rowspan="2">名称</th>
              <th class="border border-[#333] font-bold" colspan="8">工程量名称</th>
            </tr>
            <tr class="h-[76px] font-normal">
              <th class="border border-[#333] font-normal text-[13px]">体积(m3)</th>
              <th class="border border-[#333] font-normal">外墙外侧<br>钢丝网片<br><span class="text-[14px]">总长度(m)</span></th>
              <th class="border border-[#333] font-normal">外墙内侧<br>钢丝网片<br><span class="text-[14px]">总长度(m)</span></th>
              <th class="border border-[#333] font-normal">内墙两侧<br>钢丝网片<br><span class="text-[14px]">总长度(m)</span></th>
              <th class="border border-[#333] font-normal">外墙外侧<br>满挂钢丝<br>网片面积(<br>m2)</th>
              <th class="border border-[#333] font-normal text-[14px]">墙厚(m)</th>
              <th class="border border-[#333] font-normal text-[14px]">墙高(m)</th>
              <th class="border border-[#333] font-normal text-left pl-[10px]">长度(m)</th>
            </tr>
          </thead>
          <tbody class="text-[12.5px] text-right">
            <tr class="h-[41px]">
              <td class="bg-[#f0f0f0] text-left text-[#666] text-[14px] overflow-hidden">1</td>
              <td class="border border-[#333] text-center text-[15px]" rowspan="7">混合砂浆<br>32.5</td>
              <td class="border border-[#333] text-center" rowspan="6">M5</td>
              <td class="border border-[#333] text-center" rowspan="2">120</td>
              <td class="border border-[#333] text-center text-[13px]">ZNQ120 [<br>内墙]</td>
              <td class="border border-[#333] pr-[2px]">0.9068</td><td class="border border-[#333] pr-[2px]">0</td><td class="border border-[#333] pr-[2px]">0</td><td class="border border-[#333] pr-[2px]">30.82</td><td class="border border-[#333] pr-[2px]">0</td><td class="border border-[#333] pr-[2px]">0.345</td><td class="border border-[#333] pr-[2px]">8.7</td><td class="border border-[#333] pr-[2px]">2.63</td>
            </tr>
            <tr class="h-[24px] font-bold text-[14px]">
              <td class="bg-[#f0f0f0] text-left text-[#666] font-normal overflow-hidden">2</td>
              <td class="border border-[#333] text-center text-[15px]">小计</td>
              <td class="border border-[#333] pr-[2px]">0.9068</td><td class="border border-[#333] pr-[2px]">0</td><td class="border border-[#333] pr-[2px]">0</td><td class="border border-[#333] pr-[2px]">30.82</td><td class="border border-[#333] pr-[2px]">0</td><td class="border border-[#333] pr-[2px]">0.345</td><td class="border border-[#333] pr-[2px]">8.7</td><td class="border border-[#333] pr-[2px]">2.63</td>
            </tr>
            <tr class="h-[41px]">
              <td class="bg-[#f0f0f0] text-left text-[#666] text-[14px] overflow-hidden">3</td>
              <td class="border border-[#333] text-center" rowspan="3">200</td>
              <td class="border border-[#333] text-center text-[13px]">ZNQ200 [<br>内墙]</td>
              <td class="border border-[#333] pr-[2px]">3.2762</td><td class="border border-[#333] pr-[2px]">0</td><td class="border border-[#333] pr-[2px]">0</td><td class="border border-[#333] pr-[2px]">48.46</td><td class="border border-[#333] pr-[2px]">0</td><td class="border border-[#333] pr-[2px]">0.6</td><td class="border border-[#333] pr-[2px]">8.7</td><td class="border border-[#333] pr-[2px]">5.57</td>
            </tr>
            <tr class="h-[42px]">
              <td class="bg-[#f0f0f0] text-left text-[#666] text-[14px] overflow-hidden">4</td>
              <td class="border border-[#333] text-center text-[13px]">ZWQ200 [<br>外墙]</td>
              <td class="border border-[#333] pr-[2px]">2.0103</td><td class="border border-[#333] pr-[2px]">47.42</td><td class="border border-[#333] pr-[2px]">0</td><td class="border border-[#333] pr-[2px]">0</td><td class="border border-[#333] pr-[2px]">20.6536</td><td class="border border-[#333] pr-[2px]">0.2</td><td class="border border-[#333] pr-[2px]">2.9</td><td class="border border-[#333] pr-[2px]">7.71</td>
            </tr>
            <tr class="h-[24px] font-bold text-[14px]">
              <td class="bg-[#f0f0f0] text-left text-[#666] font-normal overflow-hidden">5</td>
              <td class="border border-[#333] text-center text-[15px]">小计</td>
              <td class="border border-[#333] pr-[2px]">5.2865</td><td class="border border-[#333] pr-[2px]">47.42</td><td class="border border-[#333] pr-[2px]">0</td><td class="border border-[#333] pr-[2px]">48.46</td><td class="border border-[#333] pr-[2px]">20.6536</td><td class="border border-[#333] pr-[2px]">0.8</td><td class="border border-[#333] pr-[2px]">11.6</td><td class="border border-[#333] pr-[6px]">13.28</td>
            </tr>
            <tr class="h-[23px] font-bold text-[14px]">
              <td class="bg-[#f0f0f0] text-left text-[#666] font-normal overflow-hidden">6</td>
              <td class="border border-[#333] text-center text-[15px]" colspan="2">小计</td>
              <td class="border border-[#333] pr-[2px]">6.1933</td><td class="border border-[#333] pr-[2px]">47.42</td><td class="border border-[#333] pr-[2px]">0</td><td class="border border-[#333] pr-[2px]">79.28</td><td class="border border-[#333] pr-[2px]">20.6536</td><td class="border border-[#333] pr-[2px]">1.145</td><td class="border border-[#333] pr-[2px]">20.3</td><td class="border border-[#333] pr-[6px]">19.91</td>
            </tr>
            <tr class="h-[24px] font-bold text-[14px]">
              <td class="bg-[#f0f0f0] text-left text-[#666] font-normal overflow-hidden">7</td>
              <td class="border border-[#333] text-center text-[15px]" colspan="3">小计</td>
              <td class="border border-[#333] pr-[2px]">6.1933</td><td class="border border-[#333] pr-[2px]">47.42</td><td class="border border-[#333] pr-[2px]">0</td><td class="border border-[#333] pr-[2px]">79.28</td><td class="border border-[#333] pr-[2px]">20.6536</td><td class="border border-[#333] pr-[2px]">1.145</td><td class="border border-[#333] pr-[2px]">20.3</td><td class="border border-[#333] pr-[6px]">19.91</td>
            </tr>
            <tr class="h-[24px] bg-[#e6e6e6]">
              <td class="bg-[#f0f0f0] text-left text-[#666] text-[14px] overflow-hidden">8</td>
              <td class="border border-[#333] text-center text-[15px]" colspan="4">合计</td>
              <td class="border border-[#333] pr-[2px]">6.1933</td><td class="border border-[#333] pr-[2px]">47.42</td><td class="border border-[#333] pr-[2px]">0</td><td class="border border-[#333] pr-[2px]">79.28</td><td class="border border-[#333] pr-[2px]">20.6536</td><td class="border border-[#333] pr-[2px]">1.145</td><td class="border border-[#333] pr-[2px]">20.3</td><td class="border border-[#333] pr-[2px]">19.91</td>
            </tr>
          </tbody>
        </table>
      </div>
      <div class="flex-1 bg-white pl-[20px] pt-[4px]"><div class="w-[781px] h-[10px] rounded-full bg-[#c8c8c8]"></div></div>
      <div class="absolute left-[896px] top-[51px] w-[8px] h-[257px] rounded-full bg-[#d0d0d0]"></div>
    </div>

    <div class="h-[19px] shrink-0"></div>

    <!-- lower panel -->
    <div class="flex-1 ml-[15px] bg-white border-t-2 border-r border-[#c8c8c8] rounded-tl-[4px] flex flex-col">
      <div class="h-[26px] shrink-0 pl-[3px] whitespace-pre">图元明细  7 (7)</div>
      <div class="flex-1 border-t-2 border-l-2 border-[#aeaeae] flex">
        <div class="w-[308px] shrink-0 h-full bg-[linear-gradient(90deg,#f0f0f0_8px,#fff_8px)]">
          <table class="table-fixed border-collapse w-[308px] text-[16px] leading-[20px] text-[#0c2a55]">
            <colgroup><col class="w-[8px]"><col class="w-[100px]"><col class="w-[200px]"></colgroup>
            <thead>
              <tr class="h-[21px] bg-[#74b0f0] text-[#f0f7ff] text-[15px] font-bold">
                <th class="bg-[#f0f0f0]"></th><th class="border-r-2 border-[#a8ccf5]">构件名称</th><th>位置</th>
              </tr>
            </thead>
            <tbody>
              <tr class="h-[37.5px] bg-[#2d7de0] border-b-2 border-[#a8ccf5]"><td class="bg-[#74b0f0] text-[#e8f3ff] font-bold overflow-hidden">1</td><td class="border-r-2 border-[#a8ccf5] pl-[3px]">ZWQ200</td><td class="pl-[6px] tracking-[0.35px] whitespace-nowrap overflow-hidden">&lt;1,A+2000&gt; &lt;1,D-1600&gt;</td></tr>
              <tr class="h-[37.5px] bg-[#2d7de0] border-b-2 border-[#a8ccf5]"><td class="bg-[#74b0f0] text-[#e8f3ff] font-bold overflow-hidden">2</td><td class="border-r-2 border-[#a8ccf5] pl-[3px]">ZNQ200</td><td class="pl-[6px] tracking-[0.35px] whitespace-nowrap overflow-hidden">&lt;3,A+900&gt; &lt;3,A+4500&gt;</td></tr>
              <tr class="h-[37.5px] bg-[#2d7de0] border-b-2 border-[#a8ccf5]"><td class="bg-[#74b0f0] text-[#e8f3ff] font-bold overflow-hidden">3</td><td class="border-r-2 border-[#a8ccf5] pl-[3px]">ZNQ200</td><td class="pl-[6px] tracking-[0.35px] whitespace-nowrap overflow-hidden">&lt;1,D-3340&gt; &lt;3,D-3340&gt;</td></tr>
              <tr class="h-[37.5px] bg-[#2d7de0] border-b-2 border-[#a8ccf5]"><td class="bg-[#74b0f0] text-[#e8f3ff] font-bold overflow-hidden">4</td><td class="border-r-2 border-[#a8ccf5] pl-[3px]">ZNQ200</td><td class="pl-[6px] tracking-[0.35px] whitespace-nowrap overflow-hidden">&lt;3,D-3440&gt; &lt;3,D-1600&gt;</td></tr>
              <tr class="h-[37.5px] bg-[#2d7de0] border-b-2 border-[#a8ccf5]"><td class="bg-[#74b0f0] text-[#e8f3ff] font-bold overflow-hidden">5</td><td class="border-r-2 border-[#a8ccf5] pl-[3px]">ZNQ120</td><td class="pl-[6px] tracking-[0.35px] whitespace-nowrap overflow-hidden">&lt;1,A+3640&gt; &lt;3-1080,A+...</td></tr>
              <tr class="h-[37.5px] bg-[#2d7de0] border-b-2 border-[#a8ccf5]"><td class="bg-[#74b0f0] text-[#e8f3ff] font-bold overflow-hidden">6</td><td class="border-r-2 border-[#a8ccf5] pl-[3px]">ZNQ120</td><td class="pl-[6px] tracking-[0.35px] whitespace-nowrap overflow-hidden">&lt;3-1140,A+3640&gt; &lt;3-11...</td></tr>
              <tr class="h-[37.5px] bg-[#2d7de0]"><td class="bg-[#74b0f0] text-[#e8f3ff] font-bold overflow-hidden">7</td><td class="border-r-2 border-[#a8ccf5] pl-[3px]">ZNQ120</td><td class="pl-[6px] tracking-[0.35px] whitespace-nowrap overflow-hidden">&lt;3+100,A+4440&gt; &lt;3-11...</td></tr>
            </tbody>
          </table>
        </div>
        <div class="flex-1 h-[21px] bg-[#f0f0f0]"></div>
      </div>
    </div>
  </section>

  <!-- red annotations drawn on the picture -->
  <svg class="absolute inset-0 pointer-events-none" width="1828" height="927" viewBox="0 0 1828 927">
    <g fill="none" stroke="#f83a3a">
      <rect x="389.500" y="5" width="88" height="30" stroke-width="7"/>
      <rect x="28" y="439" width="125" height="51" stroke-width="6"/>
      <rect x="1310" y="212" width="331" height="325" stroke-width="7.500"/>
    </g>
    <g fill="#f83a3a">
      <rect x="312" y="123" width="115" height="6"/>
      <polygon points="109,425 365,33 358,25 387,5 386,38 378,36 112,425"/>
      <polygon points="486,72 490,76 453,109 458,108 435,117 445,93 449,99"/>
      <polygon points="408,132 1246,353 1248,350 1267,365 1243,371 1244,364"/>
    </g>
  </svg>
</div>
</body>
</html>
